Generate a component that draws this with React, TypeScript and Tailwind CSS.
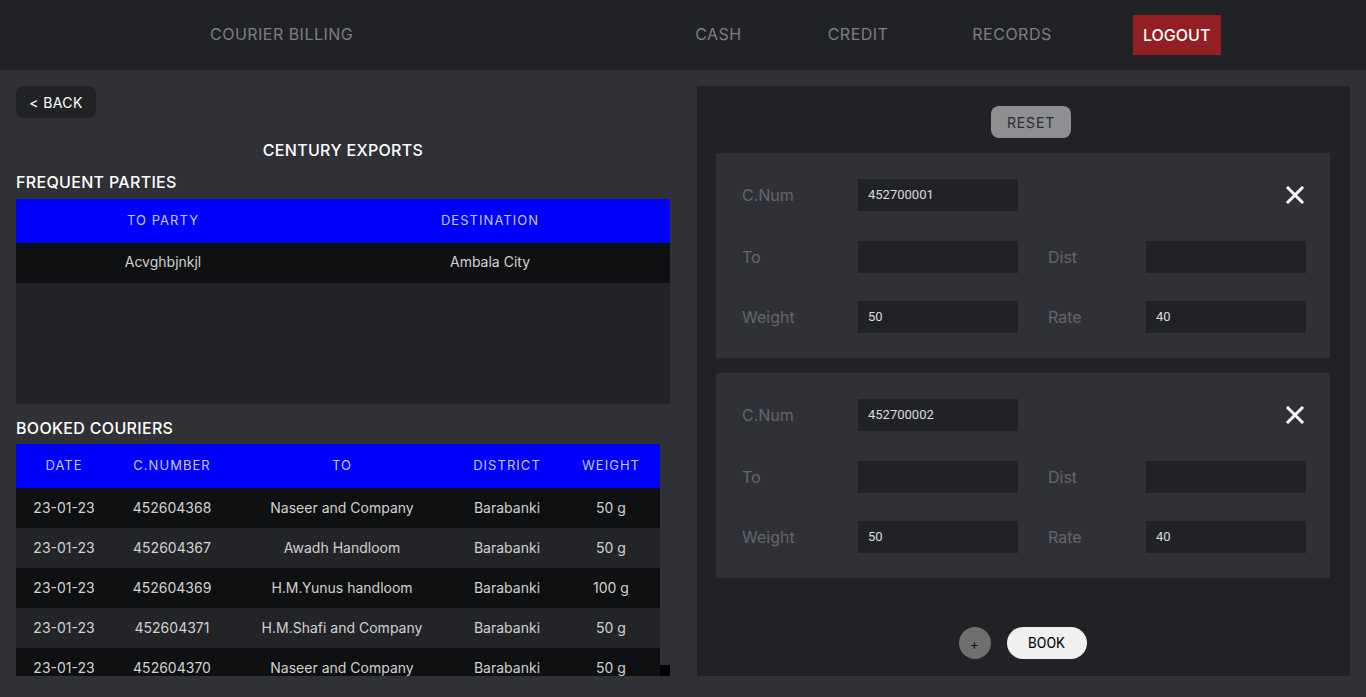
import React from 'react';

const font = { fontFamily: 'Inter, "Noto Sans", sans-serif' };

const parties = [{ to: 'Acvghbjnkjl', dest: 'Ambala City' }];

const couriers = [
  { date: '23-01-23', num: '452604368', to: 'Naseer and Company', dist: 'Barabanki', w: '50 g' },
  { date: '23-01-23', num: '452604367', to: 'Awadh Handloom', dist: 'Barabanki', w: '50 g' },
  { date: '23-01-23', num: '452604369', to: 'H.M.Yunus handloom', dist: 'Barabanki', w: '100 g' },
  { date: '23-01-23', num: '452604371', to: 'H.M.Shafi and Company', dist: 'Barabanki', w: '50 g' },
  { date: '23-01-23', num: '452604370', to: 'Naseer and Company', dist: 'Barabanki', w: '50 g' },
];

const entries = [
  { num: '452700001', weight: '50', rate: '40' },
  { num: '452700002', weight: '50', rate: '40' },
];

const Field = ({ value }: { value: string }) => (
  <div
    className="h-8 w-[160px] bg-[#212226] pl-[10px] flex items-center text-[13px] text-[#dcdcdc]"
    style={{ fontFamily: 'Roboto, "Liberation Sans", sans-serif' }}
  >
    {value}
  </div>
);

const Entry = ({ num, weight, rate }: { num: string; weight: string; rate: string }) => (
  <div className="bg-[#303136] h-[205px] pl-[26px] pr-[24px] pt-[26px]">
    <div className="grid grid-cols-[116px_160px_30px_98px_160px] items-center text-[16px] text-[#64666b]">
      <span>C.Num</span>
      <Field value={num} />
      <span />
      <span />
      <div className="flex justify-end pr-[2px]">
        <svg width="18" height="18" viewBox="0 0 18 18">
          <path d="M2 2L16 16M16 2L2 16" stroke="#ffffff" strokeWidth="3" strokeLinecap="square" />
        </svg>
      </div>
    </div>
    <div className="grid grid-cols-[116px_160px_30px_98px_160px] items-center text-[16px] text-[#64666b] mt-[30px]">
      <span>To</span>
      <Field value="" />
      <span />
      <span>Dist</span>
      <Field value="" />
    </div>
    <div className="grid grid-cols-[116px_160px_30px_98px_160px] items-center text-[16px] text-[#64666b] mt-[28px]">
      <span>Weight</span>
      <Field value={weight} />
      <span />
      <span>Rate</span>
      <Field value={rate} />
    </div>
  </div>
);

export default function App() {
  return (
    <div className="w-[1366px] h-[697px] bg-[#303136] overflow-hidden flex flex-col" style={font}>
      <header className="h-[70px] shrink-0 bg-[#212226] flex items-center text-[16px] tracking-[0.03em] text-[#7c7e83]">
        <span className="ml-[210px] -mt-[2px]">COURIER BILLING</span>
        <span className="ml-[342px] -mt-[2px]">CASH</span>
        <span className="ml-[86px] -mt-[2px]">CREDIT</span>
        <span className="ml-[84px] -mt-[2px]">RECORDS</span>
        <button className="ml-[81px] h-10 w-[88px] bg-[#931f24] text-white tracking-normal font-medium">
          LOGOUT
        </button>
      </header>

      <main className="flex px-4 pt-4 gap-[27px]">
        <section className="w-[654px] flex flex-col">
          <button className="w-20 h-8 rounded-lg bg-[#212226] text-white text-[14px] tracking-[0.03em]">
            &lt; BACK
          </button>
          <h2 className="mt-5 text-center text-white text-[16px] leading-6 font-medium tracking-[0.02em]">
            CENTURY EXPORTS
          </h2>
          <h3 className="mt-2 text-white text-[16px] leading-6 font-medium tracking-[0.02em]">FREQUENT PARTIES</h3>
          <div className="mt-[5px] h-[205px] bg-[#222327]">
            <table className="w-full border-collapse text-[14px]">
              <thead>
                <tr className="bg-[#0000ff] h-11 text-[13px] text-[#c8c8f2] tracking-[0.08em] font-normal">
                  <th className="w-[294px] font-normal">TO PARTY</th>
                  <th className="font-normal">DESTINATION</th>
                </tr>
              </thead>
              <tbody>
                {parties.map((p) => (
                  <tr key={p.to} className="h-10 bg-[#0f1012] text-[#d2d2d2]">
                    <td className="text-center pb-[3px]">{p.to}</td>
                    <td className="text-center pb-[3px]">{p.dest}</td>
                  </tr>
                ))}
              </tbody>
            </table>
          </div>

          <h3 className="mt-3 text-white text-[16px] leading-6 font-medium tracking-[0.02em]">BOOKED COURIERS</h3>
          <div className="relative mt-1 h-[232px] overflow-hidden">
            <table className="w-[644px] border-collapse text-[14px]">
              <thead>
                <tr className="bg-[#0000ff] h-11 text-[13px] text-[#c8c8f2] tracking-[0.08em]">
                  <th className="w-[96px] font-normal">DATE</th>
                  <th className="w-[120px] font-normal">C.NUMBER</th>
                  <th className="w-[220px] font-normal">TO</th>
                  <th className="w-[110px] font-normal">DISTRICT</th>
                  <th className="font-normal">WEIGHT</th>
                </tr>
              </thead>
              <tbody>
                {couriers.map((c, i) => (
                  <tr
                    key={c.num}
                    className={`h-10 text-[#d2d2d2] ${i % 2 === 0 ? 'bg-[#0f1012]' : 'bg-[#232428]'}`}
                  >
                    <td className="text-center pb-[2px]">{c.date}</td>
                    <td className="text-center pb-[2px]">{c.num}</td>
                    <td className="text-center pb-[2px]">{c.to}</td>
                    <td className="text-center pb-[2px]">{c.dist}</td>
                    <td className="text-center pb-[2px]">{c.w}</td>
                  </tr>
                ))}
              </tbody>
            </table>
            <div className="absolute right-0 bottom-0 w-[10px] h-[11px] bg-black" />
          </div>
        </section>

        <section className="w-[653px] h-[590px] bg-[#212226] px-[19px] pt-5 flex flex-col">
          <div className="flex justify-center pl-[15px]">
            <button className="w-20 h-8 rounded-lg bg-[#8e8f91] text-[#2a2b2e] text-[14px] tracking-[0.06em]">
              RESET
            </button>
          </div>
          <div className="mt-[15px] w-[614px] flex flex-col gap-[15px]">
            {entries.map((e) => (
              <Entry key={e.num} {...e} />
            ))}
          </div>
          <div className="mt-[49px] flex justify-center items-center gap-4 pr-[2px]">
            <button className="w-8 h-8 rounded-full bg-[#6f6f6f] text-[#111] text-[14px] flex items-center justify-center">
              +
            </button>
            <button
              className="w-20 h-8 rounded-full bg-[#f0f0f0] text-black text-[14px]"
              style={{ fontFamily: 'Roboto, "Liberation Sans", sans-serif' }}
            >
              BOOK
            </button>
          </div>
        </section>
      </main>
    </div>
  );
}
